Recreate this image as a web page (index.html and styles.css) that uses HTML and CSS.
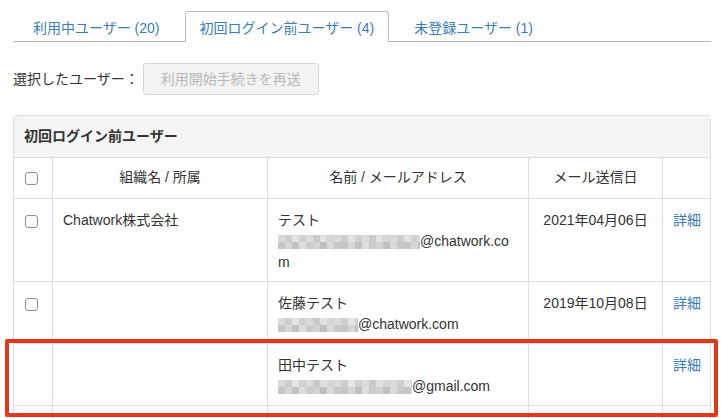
FILE: index.html
```html
<!DOCTYPE html>
<html lang="ja">
<head>
<meta charset="utf-8">
<title>ユーザー管理</title>
<link rel="stylesheet" href="styles.css">
</head>
<body>
<div class="page">
  <ul class="tabs">
    <li class="tab">利用中ユーザー (20)</li>
    <li class="tab active">初回ログイン前ユーザー (4)</li>
    <li class="tab">未登録ユーザー (1)</li>
  </ul>

  <div class="actions">
    <span class="actions-label">選択したユーザー：</span>
    <button class="btn" disabled>利用開始手続きを再送</button>
  </div>

  <section class="panel">
    <div class="panel-title">初回ログイン前ユーザー</div>
    <div class="grid">
      <div class="row head">
        <div class="cell"><input type="checkbox" class="check"></div>
        <div class="cell center">組織名 / 所属</div>
        <div class="cell center">名前 / メールアドレス</div>
        <div class="cell center">メール送信日</div>
        <div class="cell"></div>
      </div>
      <div class="row">
        <div class="cell"><input type="checkbox" class="check"></div>
        <div class="cell">Chatwork株式会社</div>
        <div class="cell">テスト<br><span class="blur w1"></span>@chatwork.co<br>m</div>
        <div class="cell center">2021年04月06日</div>
        <div class="cell"><a class="link">詳細</a></div>
      </div>
      <div class="row">
        <div class="cell"><input type="checkbox" class="check"></div>
        <div class="cell"></div>
        <div class="cell">佐藤テスト<br><span class="blur w2"></span>@chatwork.com</div>
        <div class="cell center">2019年10月08日</div>
        <div class="cell"><a class="link">詳細</a></div>
      </div>
      <div class="row">
        <div class="cell"></div>
        <div class="cell"></div>
        <div class="cell">田中テスト<br><span class="blur w3"></span>@gmail.com</div>
        <div class="cell center"></div>
        <div class="cell"><a class="link">詳細</a></div>
      </div>
      <div class="row filler">
        <div class="cell"></div>
        <div class="cell"></div>
        <div class="cell"></div>
        <div class="cell"></div>
        <div class="cell"></div>
      </div>
    </div>
  </section>
</div>
<div class="highlight"></div>
</body>
</html>
```

FILE: styles.css
```css
html, body {
  margin: 0;
  padding: 0;
  overflow: hidden;
  background: #fff;
}

body {
  font-family: "Liberation Sans", "Noto Sans CJK JP", sans-serif;
  font-size: 14px;
  line-height: 21px;
  color: #333;
}

.page {
  padding: 11px 10px 0 13px;
}

/* Tabs */
.tabs {
  display: flex;
  list-style: none;
  margin: 0;
  padding: 0;
  border-bottom: 1px solid #bbb;
}

.tab {
  margin: 0 5px -1px;
  padding: 6px 14px 4px;
  border: 1px solid transparent;
  border-bottom: none;
  border-radius: 3px 3px 0 0;
  color: #3b7db3;
  line-height: 20px;
  white-space: nowrap;
}

.tab.active {
  border-color: #bbb;
  background: #fff;
}

/* Actions */
.actions {
  display: flex;
  align-items: center;
  gap: 4px;
  margin-top: 21px;
}

.btn {
  font: inherit;
  line-height: 21px;
  padding: 5px 17px 4px;
  border: 1px solid #d6d6d6;
  border-radius: 3px;
  background: #f3f3f3;
  color: #b9b9b9;
}

/* Panel */
.panel {
  margin-top: 20px;
  border: 1px solid #ddd;
  border-radius: 4px 4px 0 0;
  overflow: hidden;
}

.panel-title {
  background: #f5f5f5;
  padding: 10px 10px;
  font-weight: bold;
  border-bottom: 1px solid #ddd;
}

.row {
  display: grid;
  grid-template-columns: 38px 215px 261px 134px 1fr;
  border-top: 1px solid #ddd;
}

.row.head {
  border-top: none;
}

.cell {
  padding: 11px 10px 8px;
  min-height: 21px;
}

.row.head .cell {
  padding: 9px 10px 10px;
}

.cell + .cell {
  border-left: 1px solid #ddd;
}

.cell.center {
  text-align: center;
}

.check {
  appearance: none;
  -webkit-appearance: none;
  display: block;
  width: 13px;
  height: 13px;
  margin: 5px 0 0 1px;
  border: 1px solid #8e8e8e;
  border-radius: 3px;
  background: #fff;
  box-sizing: border-box;
}

.link {
  color: #3b7db3;
  text-decoration: none;
  white-space: nowrap;
}

.blur {
  display: inline-block;
  height: 14px;
  vertical-align: -3px;
  background:
    repeating-linear-gradient(90deg,
      #dadada 0 7px, #cdcdcd 7px 14px, #e4e4e4 14px 21px, #d1d1d1 21px 28px,
      #dcdcdc 28px 35px, #c9c9c9 35px 42px, #e1e1e1 42px 49px, #d5d5d5 49px 56px) top / 100% 50% no-repeat,
    repeating-linear-gradient(90deg,
      #c6c6c6 0 7px, #d6d6d6 7px 14px, #c2c2c2 14px 21px, #dedede 21px 28px,
      #cbcbcb 28px 35px, #d2d2d2 35px 42px, #bfbfbf 42px 49px, #d9d9d9 49px 56px,
      #c8c8c8 56px 63px) bottom / 100% 50% no-repeat;
}

.blur.w1 { width: 142px; }
.blur.w2 { width: 80px; }
.blur.w3 { width: 134px; }

/* Annotation overlay */
.highlight {
  position: absolute;
  left: 5px;
  top: 339px;
  width: 713px;
  height: 78px;
  box-sizing: border-box;
  border: 4px solid #e2391c;
  border-radius: 2px;
  pointer-events: none;
}
```
